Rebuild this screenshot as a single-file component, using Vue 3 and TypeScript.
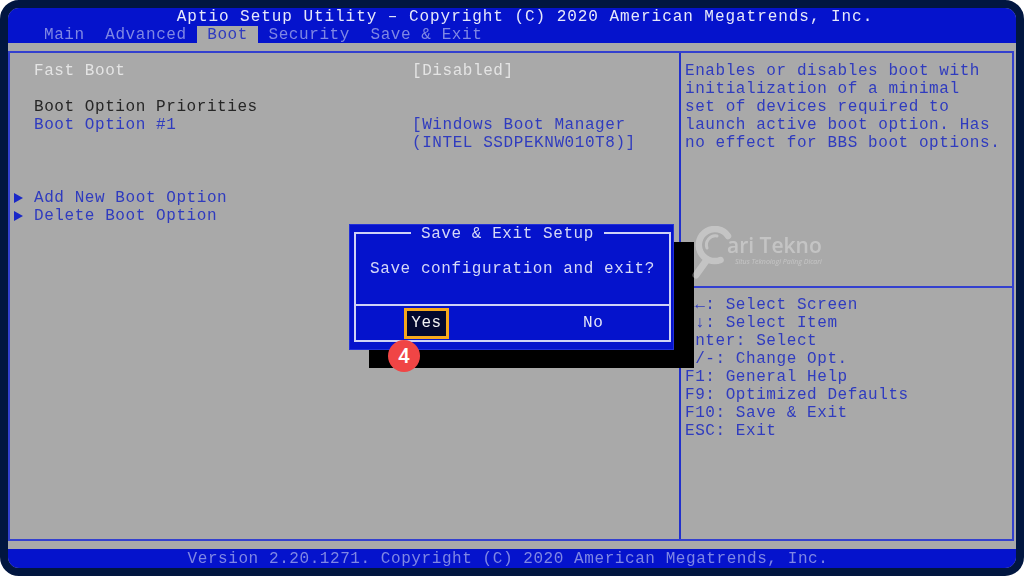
<script setup lang="ts">
interface Row { arrow?: boolean; label?: string; value?: string; kind?: string }
interface Key { sym?: string; text: string }
const tabs: string[] = ['Main', 'Advanced', 'Boot', 'Security', 'Save & Exit']
const rows: Row[] = [
  { label: 'Fast Boot', value: '[Disabled]', kind: 'white' },
  {},
  { label: 'Boot Option Priorities', kind: 'dark' },
  { label: 'Boot Option #1', value: '[Windows Boot Manager', kind: 'blue' },
  { value: '(INTEL SSDPEKNW010T8)]', kind: 'blue' },
  {},
  { kind: 'tall' },
  { arrow: true, label: 'Add New Boot Option', kind: 'blue' },
  { arrow: true, label: 'Delete Boot Option', kind: 'blue' },
]
const helpText: string[] = [
  'Enables or disables boot with',
  'initialization of a minimal',
  'set of devices required to',
  'launch active boot option. Has',
  'no effect for BBS boot options.',
]
const keys: Key[] = [
  { sym: '→←', text: ': Select Screen' },
  { sym: '↑↓', text: ': Select Item' },
  { text: 'Enter: Select' },
  { text: '+/-: Change Opt.' },
  { text: 'F1: General Help' },
  { text: 'F9: Optimized Defaults' },
  { text: 'F10: Save & Exit' },
  { text: 'ESC: Exit' },
]
</script>

<template>
  <div class="frame">
    <div class="screen">
      <header class="head">
        <div class="title">Aptio Setup Utility – Copyright (C) 2020 American Megatrends, Inc.</div>
        <nav class="tabs">
          <span v-for="t in tabs" :key="t" class="tab" :class="{ active: t === 'Boot' }">{{ t }}</span>
        </nav>
      </header>
      <main class="main">
        <section class="left">
          <div v-for="(r, i) in rows" :key="i" class="row" :class="r.kind">
            <span class="arrow"><i v-if="r.arrow" class="tri"></i></span>
            <span>{{ r.label }}</span>
            <span>{{ r.value }}</span>
          </div>
        </section>
        <aside class="right">
          <div class="help">
            <div v-for="h in helpText" :key="h" class="line">{{ h }}</div>
          </div>
          <div class="keys">
            <div v-for="k in keys" :key="k.text" class="line"><span v-if="k.sym" class="sym">{{ k.sym }}</span>{{ k.text }}</div>
          </div>
        </aside>
      </main>
      <footer class="foot">Version 2.20.1271. Copyright (C) 2020 American Megatrends, Inc.</footer>
    </div>

    <div class="dialog">
      <div class="dialog-inner">
        <div class="dialog-title">Save &amp; Exit Setup</div>
        <div class="dialog-msg">Save configuration and exit?</div>
        <div class="dialog-btns">
          <span class="btn-yes">Yes</span>
          <span class="btn-no">No</span>
        </div>
      </div>
    </div>
    <div class="badge">4</div>

    <div class="mark">
      <svg class="mark-icon" width="44" height="62" viewBox="0 0 44 62">
        <path d="M36 10 A16 16 0 1 0 28.5 34" fill="none" stroke="#fff" stroke-width="6.5" stroke-linecap="round" />
        <path d="M15 22 A9 9 0 0 1 25 10" fill="none" stroke="#fff" stroke-width="3" stroke-linecap="round" />
        <path d="M14 35 L4 49" fill="none" stroke="#fff" stroke-width="7" stroke-linecap="round" />
      </svg>
      <div class="mark-text">
        <div class="mark-name">ari Tekno</div>
        <div class="mark-sub">Situs Teknologi Paling Dicari</div>
      </div>
    </div>
  </div>
</template>

<style>
html, body { margin: 0; background: #fff; }
</style>

<style scoped>
.frame {
  position: relative;
  width: 1024px;
  height: 576px;
  overflow: hidden;
  background: #fff;
  font-family: "Liberation Mono", "DejaVu Sans Mono", monospace;
  font-size: 16px;
  letter-spacing: 0.57px;
  white-space: pre;
}
.screen {
  box-sizing: border-box;
  height: 576px;
  border: 8px solid #011640;
  border-radius: 19px;
  background: #a9a9a9;
  display: flex;
  flex-direction: column;
  overflow: hidden;
}
.screen > * { filter: blur(0.45px); }
.head {
  height: 35px;
  flex: none;
  background: #0513cc;
}
.title {
  height: 18px;
  line-height: 18px;
  text-align: center;
  color: #e6e8fa;
  letter-spacing: 0.95px;
  padding-left: 26px;
}
.tabs {
  height: 17px;
  display: flex;
  padding-left: 26px;
  color: #7f87e4;
}
.tab {
  padding: 0 10px;
  line-height: 18px;
  margin-right: 0.6px;
}
.tab.active {
  background: #a9a9a9;
  color: #2f3bbf;
}
.main {
  flex: 1;
  min-height: 0;
  margin: 8px 2px 8px 0;
  border: 2px solid #3340cf;
  display: flex;
}
.left {
  box-sizing: border-box;
  width: 671px;
  flex: none;
  padding-top: 9px;
  border-right: 2px solid #2230cc;
}
.row {
  display: grid;
  grid-template-columns: 24px 378px 1fr;
  height: 18px;
  line-height: 18px;
}
.row.tall { height: 19px; }
.arrow { display: flex; align-items: center; padding-left: 4px; }
.tri {
  width: 0;
  height: 0;
  border-left: 9px solid #1a28c8;
  border-top: 5px solid transparent;
  border-bottom: 5px solid transparent;
}
.row.white { color: #e4e4e4; }
.row.dark { color: #262626; }
.row.blue { color: #2f3bbf; }
.right {
  flex: 1;
  display: flex;
  flex-direction: column;
  color: #2f3bbf;
}
.help {
  box-sizing: border-box;
  height: 235px;
  flex: none;
  padding: 9px 0 0 4px;
  border-bottom: 2px solid #3340cf;
}
.keys { padding: 8px 0 0 4px; }
.line { height: 18px; line-height: 18px; }
.sym { font-weight: 700; }
.foot {
  height: 19px;
  flex: none;
  background: #0513cc;
  color: #7f87e4;
  line-height: 21px;
  text-align: center;
  padding-right: 8px;
}
.mark {
  position: absolute;
  left: 692px;
  top: 226px;
  display: flex;
  opacity: 0.32;
  color: #fff;
  font-family: "Open Sans", sans-serif;
  letter-spacing: 0;
  filter: blur(0.5px);
}
.mark-icon { flex: none; }
.mark-text { margin-left: -9px; padding-top: 7px; }
.mark-name { font-size: 21px; line-height: 25px; font-weight: 600; }
.mark-sub { font-size: 7px; line-height: 8px; font-style: italic; margin-left: 8px; letter-spacing: 0; }
.dialog {
  position: absolute;
  left: 349px;
  top: 224px;
  box-sizing: border-box;
  width: 325px;
  height: 126px;
  padding: 7px 2px 7px 4px;
  background: #0513cc;
  border: 1px solid #2230d8;
  box-shadow: 20px 18px 0 #000;
}
.dialog-inner {
  box-sizing: border-box;
  height: 100%;
  border: 2px solid #cfd2f5;
  display: flex;
  flex-direction: column;
  filter: blur(0.35px);
}
.dialog-title {
  align-self: flex-start;
  margin: -9px 0 0 55px;
  height: 18px;
  line-height: 18px;
  padding: 0 10px;
  background: #0513cc;
  color: #d5d8f7;
}
.dialog-msg {
  height: 18px;
  line-height: 18px;
  margin-top: 17px;
  text-align: center;
  color: #d5d8f7;
  padding-bottom: 26px;
  border-bottom: 2px solid #cfd2f5;
}
.dialog-btns {
  flex: 1;
  display: flex;
  align-items: center;
  padding-left: 48px;
  color: #e2e4f8;
}
.btn-yes {
  box-sizing: border-box;
  width: 45px;
  height: 31px;
  line-height: 25px;
  text-align: center;
  border: 3px solid #f6a81c;
  background: #03082e;
  color: #f2f2f2;
}
.btn-no { margin-left: 134px; }
.badge {
  position: absolute;
  left: 388px;
  top: 340px;
  width: 32px;
  height: 32px;
  line-height: 32px;
  border-radius: 50%;
  background: #f04545;
  color: #fff;
  text-align: center;
  font-family: Roboto, sans-serif;
  font-size: 21px;
  font-weight: 500;
  letter-spacing: 0;
}
</style>
